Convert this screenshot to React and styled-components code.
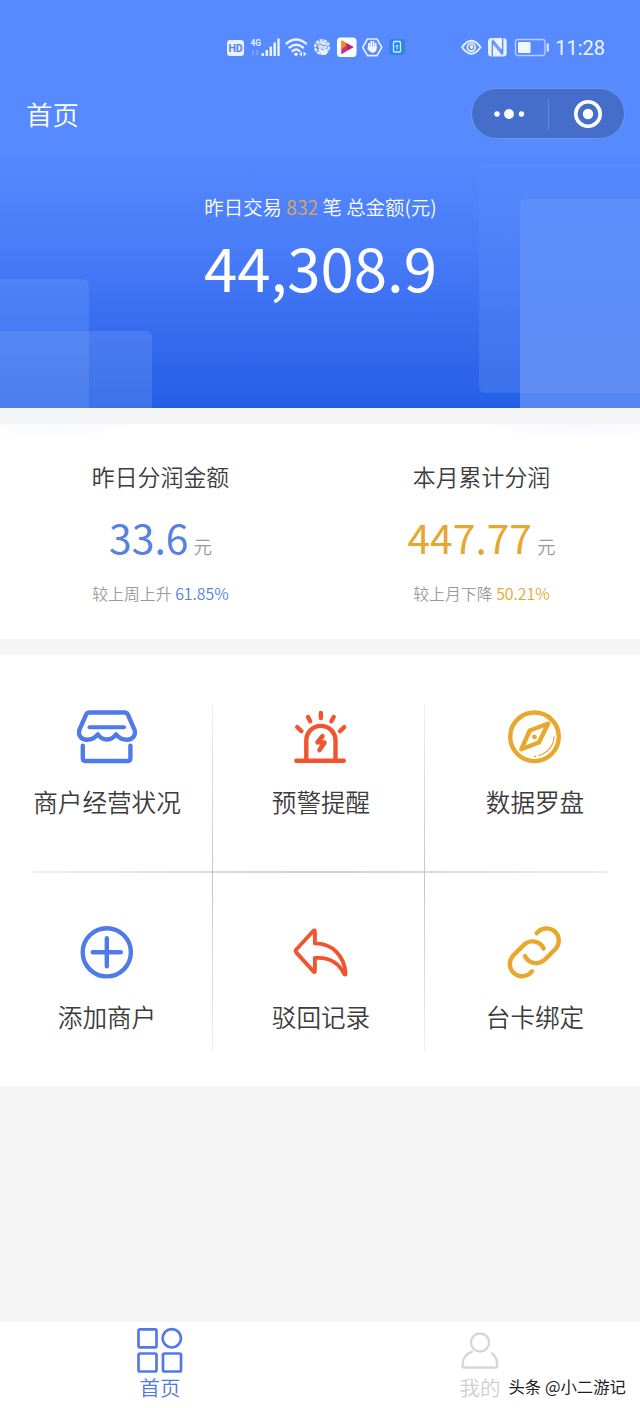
import React from "react";
import styled, { createGlobalStyle } from "styled-components";

const GlobalStyle = createGlobalStyle`
  * {
    box-sizing: border-box;
  }

  body {
    margin: 0;
    background: #f5f5f5;
    font-family: "Noto Sans CJK SC", "Noto Sans", sans-serif;
    font-weight: 350;
    color: #3c3c3c;
  }
`;

const Page = styled.div`
  display: flex;
  flex-direction: column;
  width: 640px;
  height: 1408px;
  overflow: hidden;
  background: #f5f5f5;
`;

const Hero = styled.header`
  position: relative;
  display: flex;
  flex-direction: column;
  height: 408px;
  color: #fff;
  background: linear-gradient(
    #578aff 0%,
    #578aff 36%,
    #477bf8 62%,
    #386df0 80%,
    #245fe6 100%
  );
`;

/* translucent panels behind the hero content */
const Block = styled.span`
  position: absolute;
  left: ${props => props.$x}px;
  top: ${props => props.$y}px;
  width: ${props => props.$w}px;
  height: ${props => props.$h}px;
  border-radius: ${props => props.$radius};
  background: ${props => props.$fill};
`;

const StatusBar = styled.div`
  position: relative;
  display: flex;
  align-items: center;
  height: 36px;
  margin-top: 30px;
  padding: 0 35px 0 226px;
`;

const StatusIcons = styled.div`
  display: flex;
  flex: 1;
`;

const Clock = styled.span`
  font-family: Roboto, sans-serif;
  font-size: 20px;
  font-weight: 400;
  line-height: 24px;
  color: #eef3ff;
`;

const TitleBar = styled.div`
  position: relative;
  display: flex;
  align-items: center;
  justify-content: space-between;
  height: 52px;
  margin-top: 22px;
  padding: 0 15px 0 26px;
`;

const Title = styled.h1`
  margin: 0;
  font-size: 26.4px;
  font-weight: 350;
  line-height: 40px;
`;

const Capsule = styled.div`
  display: flex;
  align-items: center;
  width: 154px;
  height: 51px;
  margin-bottom: 1px;
  border: 1px solid #6c94ef;
  border-radius: 26px;
  background: #456ecb;
`;

const CapsuleHalf = styled.span`
  display: flex;
  flex: 1;
  justify-content: center;
  align-items: center;
  height: 30px;

  & + & {
    border-left: 1px solid #6488d6;
  }
`;

const Summary = styled.div`
  position: relative;
  display: flex;
  flex-direction: column;
  align-items: center;
  padding: 53px 0 0 1px;
`;

const SummaryLabel = styled.div`
  font-size: 19.4px;
  line-height: 28px;
  white-space: pre;
`;

const Highlight = styled.span`
  color: ${props => props.$color};
`;

const Total = styled.div`
  margin-top: 1px;
  font-size: 60px;
  font-weight: 400;
  line-height: 88px;
`;

const Profits = styled.section`
  display: flex;
  height: 215px;
  margin-top: 16px;
  background: #fff;
  background-image: radial-gradient(
      ellipse 90px 14px at 55px 0,
      #f7f9ff,
      transparent
    ),
    radial-gradient(ellipse 100px 15px at 580px 0, #f5f7ff, transparent);
`;

const Profit = styled.div`
  display: flex;
  flex-direction: column;
  align-items: center;
  width: 321px;
  flex-shrink: 0;
`;

const ProfitLabel = styled.div`
  margin-top: 35px;
  font-size: 22.9px;
  line-height: 34px;
`;

const ProfitValue = styled.div`
  display: flex;
  align-items: baseline;
  gap: 5px;
  height: 60px;
  margin-top: 14px;
  font-size: 40.8px;
  font-weight: 400;
  line-height: 60px;
  color: ${props => props.$color};
`;

const Unit = styled.span`
  font-size: 18.5px;
  font-weight: 350;
  color: #9b9b9b;
`;

const Compare = styled.div`
  margin-top: 15px;
  font-size: 15.9px;
  line-height: 24px;
  color: #9b9b9b;
`;

const Menu = styled.section`
  display: grid;
  grid-template-columns: repeat(3, 214px);
  grid-template-rows: 215px 216px;
  height: 431px;
  margin-top: 16px;
  background-color: #fff;
  background-image: linear-gradient(#f0f0f0, #c4c4c4 50%, #f0f0f0),
    linear-gradient(#f0f0f0, #c4c4c4 50%, #f0f0f0),
    linear-gradient(90deg, #f0f0f0, #cfcfcf 50%, #ededed);
  background-repeat: no-repeat;
  background-size: 1px 348px, 1px 348px, 576px 2px;
  background-position: 212px 49px, 424px 49px, 32px 216px;
`;

const MenuItem = styled.div`
  display: flex;
  flex-direction: column;
  align-items: center;
  padding-top: 52px;
  font-size: 24.6px;
  line-height: 36px;
`;

const MenuIcon = styled.svg`
  width: 60px;
  height: 60px;
  margin-bottom: 16px;
  fill: none;
  stroke: ${props => props.$color};
  stroke-width: ${props => props.$width || 4.4};
  stroke-linecap: round;
  stroke-linejoin: round;
`;

const TabBar = styled.nav`
  position: relative;
  display: flex;
  height: 86px;
  margin-top: auto;
  background: #fff;
`;

const Tab = styled.div`
  display: flex;
  flex: 1;
  flex-direction: column;
  align-items: center;
  padding-top: 4px;
  font-size: 20.5px;
  line-height: 30px;
  color: ${props => (props.$active ? "#4f79de" : "#cfcfcf")};
`;

const TabIcon = styled.svg`
  width: 48px;
  height: 48px;
  margin-bottom: -2px;
  fill: none;
  stroke: ${props => props.$color};
  stroke-width: ${props => props.$width};
  stroke-linejoin: round;
  stroke-linecap: round;
`;

const Watermark = styled.span`
  position: absolute;
  right: 14px;
  bottom: 10px;
  font-size: 16.4px;
  font-weight: 400;
  line-height: 24px;
  color: #1c1c1c;
`;

const BLUE = "#4f7be8";
const RED = "#f0552f";
const GOLD = "#e8a82e";

const LeftStatus = () => (
  <svg width="182" height="24" viewBox="226 36 182 24" fill="none">
    <rect x="227" y="40" width="17" height="16" rx="3" fill="#e9f0ff" />
    <text
      x="235.5"
      y="52"
      textAnchor="middle"
      fontFamily="Roboto, sans-serif"
      fontSize="10.5"
      fontWeight="700"
      fill="#5381ee"
    >
      HD
    </text>
    <text
      x="250.5"
      y="46"
      fontFamily="Roboto, sans-serif"
      fontSize="9.5"
      fontWeight="700"
      fill="#e9f0ff"
      textLength="10.5"
      lengthAdjust="spacingAndGlyphs"
    >
      4G
    </text>
    <path
      d="M253 50v5M251.800 53.500l1.200 1.500M257 55v-5l1.200 1.500"
      stroke="#8fb0ff"
      strokeWidth="1"
    />
    <path
      d="M262.800 53v3M266.800 50v6M270.800 46.500v9.500M274.700 42.500v13.500M278.500 38.500v17.500"
      stroke="#e9f0ff"
      strokeWidth="2.500"
    />
    <path
      d="M286.500 43.500q9.500 -8 19.500 0M289.500 47.500q6.500 -5.500 13.500 0M292.500 51q4 -3 7 0"
      stroke="#e9f0ff"
      strokeWidth="2.300"
      strokeLinecap="round"
    />
    <circle cx="296" cy="54.300" r="1.800" fill="#e9f0ff" />
    <path d="M302 51.500v5l-3 -2.500zM303.500 51.500v5l3 -2.500z" fill="#e9f0ff" />
    <circle
      cx="322"
      cy="47"
      r="6.800"
      stroke="#e2ebff"
      strokeWidth="2.600"
      strokeDasharray="3.200 1"
    />
    <circle cx="322.500" cy="45.500" r="4.600" fill="#d7e3ff" />
    <path d="M318 49l3 6h5l2 -6z" fill="#eaf0ff" />
    <path d="M319 45l2 -1 2 2 3 -1M321 49l3 1" stroke="#6b93f2" />
    <rect x="337" y="37.500" width="19.500" height="19.500" rx="3.500" fill="#fff" />
    <path d="M341.500 40.500l12 6.500 -12 7z" fill="#e6323e" />
    <path d="M341.500 40.500l7 3.800 -7 5z" fill="#f08a20" />
    <path d="M341.500 54v-5l5 2z" fill="#9a35d8" />
    <path d="M346 43l7.500 4 -6 3.500z" fill="#c01f87" />
    <path
      d="M367.500 39h9.500l4.800 8.300 -4.800 8.300h-9.500l-4.800 -8.300z"
      stroke="#e9f0ff"
      strokeWidth="1.600"
      strokeLinejoin="round"
    />
    <path
      d="M369 48v-4.500M371.200 47v-5.500M373.500 47v-5.500M375.700 48v-4.500"
      stroke="#f4f7ff"
      strokeWidth="1.700"
      strokeLinecap="round"
    />
    <path d="M368.200 46.500h8.400v2.500q-.5 3.700 -4 3.700 -2.500 0 -5.400 -4.200z" fill="#f4f7ff" />
    <rect x="389" y="39" width="16" height="16" rx="3" fill="#2e86e8" />
    <rect x="393.500" y="41.500" width="7" height="10.500" rx="1" stroke="#c9f1ff" strokeWidth="1.300" />
    <path d="M397 49.500v-4.500M395.500 46.500l1.500 -1.500 1.500 1.500" stroke="#c9f1ff" />
  </svg>
);

const RightStatus = () => (
  <svg width="95" height="24" viewBox="460 36 95 24" fill="none">
    <path
      d="M462 47.300q9.500 -13 18.500 0 -9 13 -18.500 0z"
      stroke="#e9f0ff"
      strokeWidth="1.900"
      strokeLinejoin="round"
    />
    <circle cx="471.300" cy="47.300" r="3.900" stroke="#e9f0ff" strokeWidth="1.700" />
    <circle cx="471.500" cy="47" r="1.900" fill="#e9f0ff" />
    <rect x="488" y="38" width="18.700" height="18.500" rx="3.500" fill="#e9f0ff" />
    <path
      d="M492.300 56.500v-14.500l9.500 12v-5M502.700 38v14.500l-9.500 -12v4"
      stroke="#578aff"
      strokeWidth="1.300"
    />
    <rect
      x="515.500"
      y="39.500"
      width="29.500"
      height="16"
      rx="2.500"
      stroke="#b7ccff"
      strokeWidth="1.300"
    />
    <rect x="518" y="42" width="12.500" height="11" rx="1" fill="#f2f6ff" />
    <path d="M547.800 43.500v8" stroke="#dbe6ff" strokeWidth="2.200" />
  </svg>
);

const menuItems = [
  {
    label: "商户经营状况",
    color: BLUE,
    icon: (
      <>
        <path d="M12.500 5.500h35q2.500 0 3.500 2.400l6.200 14.300c2.500 5.600 -1.700 10.600 -7.200 10.600 -4.500 0 -8.500 -2.300 -11 -5.400 -4.500 6.800 -13.800 6.800 -18.200 0 -2.500 3.100 -6.500 5.400 -11 5.400 -5.500 0 -9.500 -5 -7.100 -10.600l6.300 -14.300q1 -2.400 3.500 -2.400z" />
        <path d="M12.500 20.200h34.500" strokeWidth="4" />
        <path d="M5.800 38.800v12.500q0 2.700 2.700 2.700h42.200q2.700 0 2.700 -2.700v-12.500" />
      </>
    )
  },
  {
    label: "预警提醒",
    color: RED,
    icon: (
      <>
        <path d="M5.300 53.700h47.500M15.300 53v-19.500a14.600 14.600 0 0 1 29.200 0v19.500" />
        <path d="M29.900 6v5M17 10l2.200 4.200M42.700 10l-2.300 4.200M6.200 20.200l4.200 3.900M53.200 20.200l-4.200 3.900" />
        <path d="M31.500 29.300l-5 6 7 .3 -5 7.400" strokeWidth="4.600" />
      </>
    )
  },
  {
    label: "数据罗盘",
    color: GOLD,
    icon: (
      <>
        <circle cx="29.500" cy="29.800" r="24.300" />
        <path d="M43.300 16.500l-18.500 7 -8.500 18.800 17.500 -6.800z" />
        <circle cx="29.500" cy="30" r="2.400" fill={GOLD} stroke="none" />
        <path d="M49 29.500q-.5 14 -15.300 19.200M29.500 49.400h1.200" strokeWidth="1.200" />
      </>
    )
  },
  {
    label: "添加商户",
    color: BLUE,
    icon: (
      <>
        <circle cx="29.800" cy="30.300" r="24.100" />
        <path d="M15.800 30.300h28M29.800 16.300v28" />
      </>
    )
  },
  {
    label: "驳回记录",
    color: RED,
    width: 3.9,
    icon: (
      <path d="M5.500 27.300L22.300 9q1.600 -1.500 1.600 .6v11.800c17.500 0 29.500 12.300 30.700 30q0 2.200 -1.500 .3c-5.600 -11 -14.600 -17 -29.200 -15.700v13q0 2 -1.500 .4l-17 -18.800q-1.700 -1.700 .1 -3.300z" />
    )
  },
  {
    label: "台卡绑定",
    color: GOLD,
    icon: (
      <>
        <path d="M31.700 11.300A12.240 12.240 0 1 1 50.700 26.700L39.200 38.200A12.300 12.300 0 0 1 20 34" />
        <path d="M26.900 49.300A12.240 12.240 0 1 1 7.900 33.900L19.400 22.400A12.300 12.300 0 0 1 38.600 26.600" />
      </>
    )
  }
];

const profits = [
  {
    label: "昨日分润金额",
    value: "33.6",
    compare: "较上周上升",
    rate: "61.85%",
    color: "#5582e0"
  },
  {
    label: "本月累计分润",
    value: "447.77",
    compare: "较上月下降",
    rate: "50.21%",
    color: "#e6a730"
  }
];

const App = () => {
  return (
    <>
      <GlobalStyle />
      <Page>
        <Hero>
          <Block $x={0} $y={279} $w={89} $h={129} $radius="0 6px 0 0" $fill="rgba(120, 170, 255, 0.24)" />
          <Block $x={0} $y={331} $w={152} $h={77} $radius="0 6px 0 0" $fill="rgba(130, 165, 245, 0.28)" />
          <Block
            $x={479}
            $y={164}
            $w={161}
            $h={229}
            $radius="6px 0 0 6px"
            $fill="linear-gradient(rgba(110, 160, 255, 0.08), rgba(120, 160, 250, 0.26))"
          />
          <Block
            $x={520}
            $y={199}
            $w={120}
            $h={209}
            $radius="6px 0 0 0"
            $fill="linear-gradient(rgba(110, 160, 255, 0.4), rgba(125, 165, 250, 0.55))"
          />
          <StatusBar>
            <StatusIcons>
              <LeftStatus />
            </StatusIcons>
            <RightStatus />
            <Clock>11:28</Clock>
          </StatusBar>
          <TitleBar>
            <Title>首页</Title>
            <Capsule>
              <CapsuleHalf>
                <svg width="34" height="12" viewBox="0 0 34 12" fill="#fff">
                  <circle cx="4" cy="6" r="2.700" />
                  <circle cx="16" cy="6" r="4.900" />
                  <circle cx="28.500" cy="6" r="2.700" />
                </svg>
              </CapsuleHalf>
              <CapsuleHalf>
                <svg width="32" height="30" viewBox="0 0 32 30">
                  <circle cx="18" cy="15" r="12.200" fill="none" stroke="#fff" strokeWidth="3.600" />
                  <circle cx="18" cy="15" r="5.200" fill="#fff" />
                </svg>
              </CapsuleHalf>
            </Capsule>
          </TitleBar>
          <Summary>
            <SummaryLabel>
              昨日交易 <Highlight $color="#e3a548">832</Highlight> 笔 总金额(元)
            </SummaryLabel>
            <Total>44,308.9</Total>
          </Summary>
        </Hero>
        <Profits>
          {profits.map(item => (
            <Profit key={item.label}>
              <ProfitLabel>{item.label}</ProfitLabel>
              <ProfitValue $color={item.color}>
                {item.value}
                <Unit>元</Unit>
              </ProfitValue>
              <Compare>
                {item.compare} <Highlight $color={item.color}>{item.rate}</Highlight>
              </Compare>
            </Profit>
          ))}
        </Profits>
        <Menu>
          {menuItems.map(item => (
            <MenuItem key={item.label}>
              <MenuIcon viewBox="0 0 60 60" $color={item.color} $width={item.width}>
                {item.icon}
              </MenuIcon>
              {item.label}
            </MenuItem>
          ))}
        </Menu>
        <TabBar>
          <Tab $active>
            <TabIcon viewBox="0 0 48 48" $color="#5479e6" $width={2.7}>
              <rect x="2.500" y="3.300" width="18" height="18" rx="1.500" />
              <circle cx="35.800" cy="12.300" r="9.200" />
              <rect x="2.500" y="27.500" width="18" height="18" rx="1.500" />
              <rect x="27" y="27.500" width="18" height="18" rx="1.500" />
            </TabIcon>
            首页
          </Tab>
          <Tab>
            <TabIcon viewBox="0 0 48 48" $color="#d6d6d6" $width={2.3}>
              <circle cx="24" cy="16.500" r="9" />
              <path d="M16 25.700c-6 2 -9.500 7.500 -9.500 14.300q0 1.500 1.500 1.500h31.800q1.500 0 1.500 -1.500c0 -6 -1.500 -10 -5.300 -12.800" />
            </TabIcon>
            我的
          </Tab>
          <Watermark>头条 @小二游记</Watermark>
        </TabBar>
      </Page>
    </>
  );
};

export default App;
